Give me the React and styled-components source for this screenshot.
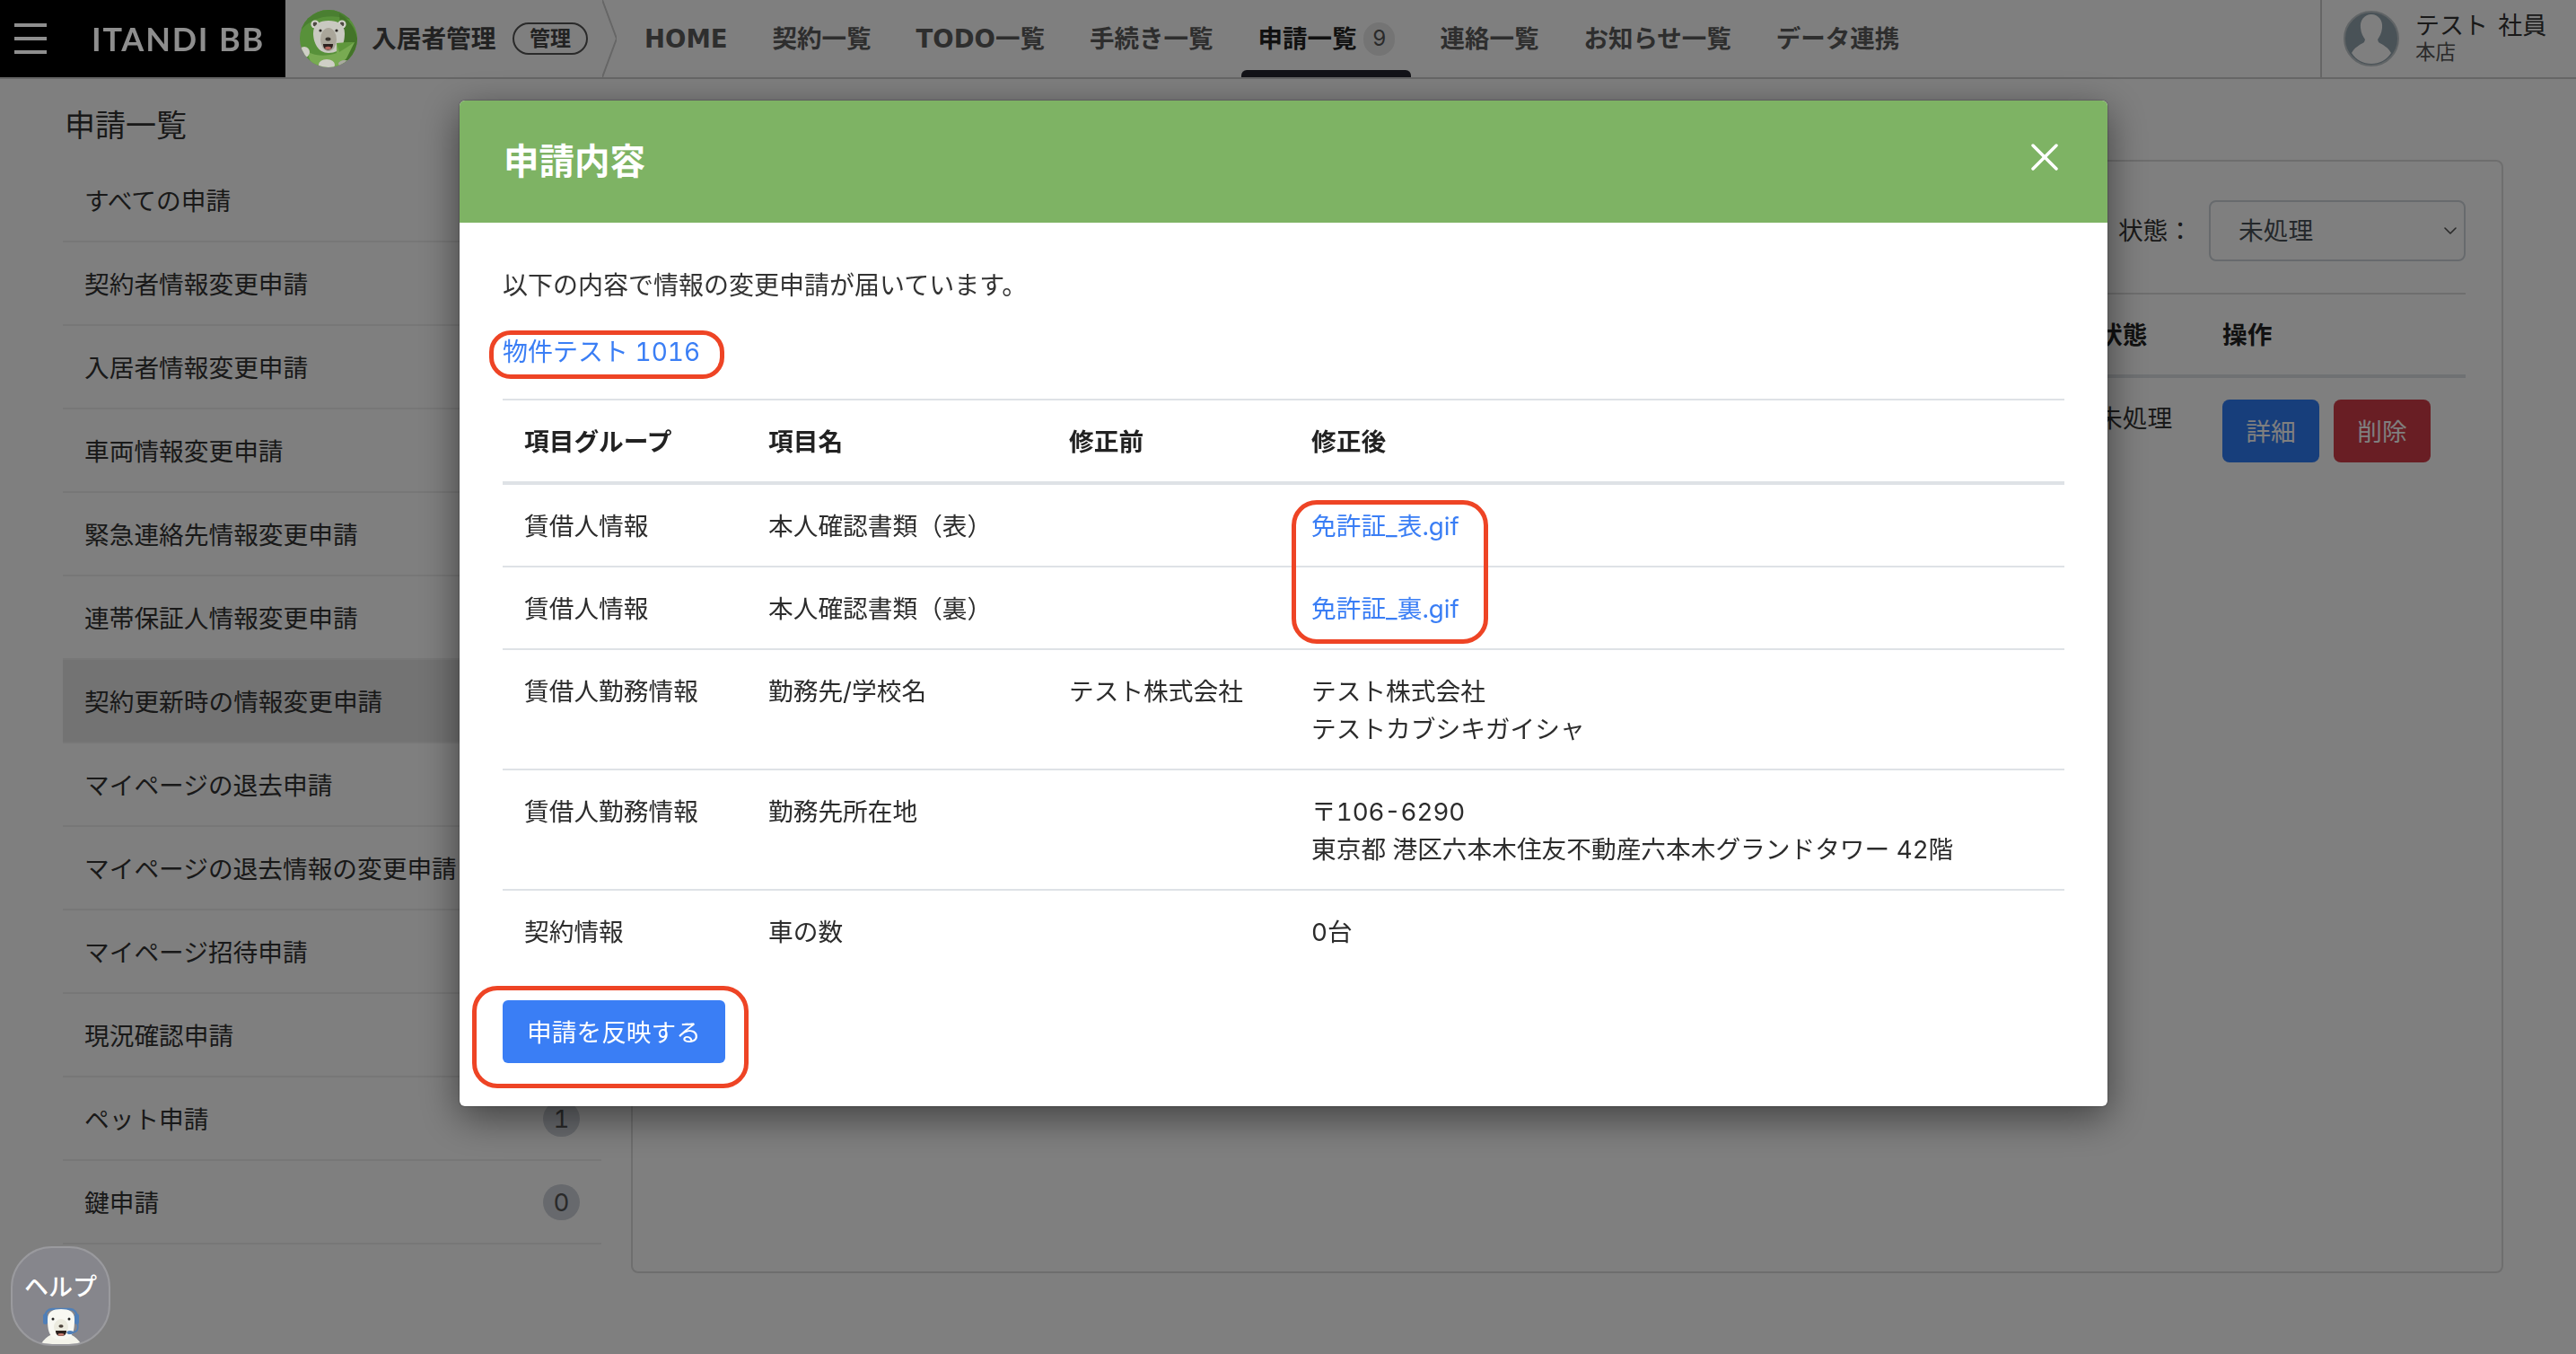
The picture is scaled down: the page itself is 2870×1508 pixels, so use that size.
import React from 'react';
import styled, { createGlobalStyle } from 'styled-components';
import { ChevronDown, X } from 'lucide-react';

const GlobalStyle = createGlobalStyle`
  html, body {
    margin: 0;
    height: 100%;
    overflow: hidden;
    background: #fff;
  }
  body {
    font-family: Inter, "Noto Sans CJK JP", sans-serif;
    font-size: 27.7px;
    font-variant-numeric: tabular-nums;
    line-height: 42px;
    color: #333;
  }
  * { box-sizing: border-box; }
`;

const Header = styled.header`
  display: flex;
  height: 88px;
  border-bottom: 2px solid #ccc;
`;

const BrandBlock = styled.div`
  display: flex;
  align-items: center;
  width: 318px;
  padding-left: 16px;
  background: #000;
`;

const Burger = styled.div`
  position: relative;
  z-index: 11;
  display: flex;
  flex-direction: column;
  gap: 11px;
  width: 36px;
  margin-right: 50px;
  span {
    height: 4px;
    background: #8e8e8e;
  }
`;

const BrandName = styled.div`
  position: relative;
  z-index: 11;
  font-family: Lato, sans-serif;
  font-size: 36px;
  font-weight: 700;
  letter-spacing: 1.8px;
  color: #8e8e8e;
  white-space: nowrap;
`;

const AppBlock = styled.div`
  display: flex;
  align-items: center;
  padding-left: 16px;
  font-weight: 700;
  color: #444;
`;

const AppLogo = styled.svg`
  position: relative;
  z-index: 11;
  width: 64px;
  height: 64px;
  margin-right: 16px;
`;

const AppName = styled.div`
  width: 157px;
  white-space: nowrap;
`;

const RoleBadge = styled.div`
  width: 84px;
  height: 36px;
  margin-right: 16px;
  border: 2px solid #555;
  border-radius: 18px;
  font-size: 23px;
  line-height: 32px;
  text-align: center;
`;

const Divider = styled.svg`
  width: 16px;
  height: 86px;
  margin-right: 13px;
`;

const Nav = styled.nav`
  display: flex;
  gap: 14px;
  font-family: "DejaVu Sans", "Noto Sans CJK JP", sans-serif;
  font-size: 27.5px;
`;

const NavItem = styled.a`
  position: relative;
  display: flex;
  align-items: center;
  gap: 8px;
  height: 86px;
  padding: 0 18px;
  font-weight: 700;
  white-space: nowrap;
  color: ${(props) => (props.$active ? '#222' : '#5c5c5c')};
  ${(props) =>
    props.$active &&
    `
    &::after {
      content: '';
      position: absolute;
      left: 0;
      right: 0;
      bottom: 0;
      height: 8px;
      border-radius: 6px 6px 0 0;
      background: #26262f;
    }
  `}
`;

const NavCount = styled.span`
  width: 35px;
  height: 37px;
  border-radius: 18px;
  background: #e8e8e8;
  font-family: Inter, sans-serif;
  font-size: 24px;
  font-weight: 400;
  line-height: 35px;
  text-align: center;
  color: #555;
`;

const UserBlock = styled.div`
  display: flex;
  align-items: center;
  gap: 18px;
  width: 285px;
  margin-left: auto;
  padding-left: 24px;
  border-left: 2px solid #ccc;
`;

const UserIcon = styled.svg`
  width: 62px;
  height: 62px;
`;

const UserName = styled.div`
  font-size: 27px;
  line-height: 30px;
  word-spacing: 4px;
  color: #333;
  white-space: nowrap;
`;

const UserBranch = styled.div`
  font-size: 22.5px;
  line-height: 28px;
  color: #555;
`;

const Layout = styled.div`
  display: flex;
`;

const Sidebar = styled.aside`
  flex: none;
  width: 670px;
  margin-left: 70px;
`;

const SidebarTitle = styled.h2`
  margin: 0 0 12px;
  padding: 26px 0 0 2px;
  font-size: 34px;
  font-weight: 400;
  line-height: 51px;
  color: #333;
`;

const SidebarRow = styled.a`
  display: flex;
  align-items: center;
  justify-content: space-between;
  width: 600px;
  height: 93px;
  padding: 2px 24px 0;
  border-bottom: 2px solid #eee;
  background: ${(props) => (props.$active ? '#e6e6e6' : 'transparent')};
  white-space: nowrap;
`;

const RowCount = styled.span`
  width: 41px;
  height: 40px;
  margin-top: -2px;
  border-radius: 20px;
  background: #cfd3da;
  line-height: 40px;
  text-align: center;
  color: #555;
`;

const Main = styled.main`
  flex: none;
  width: 2086px;
  height: 1240px;
  margin: 90px 0 0 -37px;
  padding: 43px 40px 0;
  border: 2px solid #dcdcdc;
  border-radius: 8px;
`;

const FilterBar = styled.div`
  display: flex;
  align-items: center;
  justify-content: flex-end;
  padding-bottom: 35px;
  border-bottom: 2px solid #ddd;
`;

const FilterLabel = styled.span`
  margin-right: 18px;
`;

const SelectWrap = styled.div`
  position: relative;
  width: 286px;
  height: 68px;
  svg {
    position: absolute;
    top: 22px;
    right: 5px;
    color: #555;
    pointer-events: none;
  }
`;

const StatusSelect = styled.select`
  width: 100%;
  height: 100%;
  padding-left: 31px;
  border: 2px solid #ced4da;
  border-radius: 8px;
  background: transparent;
  font: inherit;
  color: #495057;
  appearance: none;
`;

const RequestTable = styled.table`
  width: 100%;
  border-spacing: 0;
  table-layout: fixed;
  th {
    height: 93px;
    padding: 0 24px;
    border-bottom: 4px solid #dee2e6;
    font-weight: 700;
    text-align: left;
    color: #222;
  }
  td {
    padding: 24px;
    vertical-align: top;
  }
  td:last-child {
    display: flex;
    gap: 16px;
    padding-bottom: 0;
  }
`;

const SmallButton = styled.button`
  width: 108px;
  height: 70px;
  padding: 2px 0 0;
  border: 0;
  border-radius: 8px;
  background: ${(props) => (props.$danger ? '#d33c49' : '#2f7cf6')};
  font: inherit;
  color: #fff;
`;

const Backdrop = styled.div`
  position: fixed;
  inset: 0;
  z-index: 10;
  background: rgba(0, 0, 0, 0.5);
`;

const Modal = styled.section`
  position: absolute;
  top: 112px;
  left: 512px;
  width: 1836px;
  border-radius: 6px;
  background: #fff;
  box-shadow: 0 0 2px rgba(0, 0, 0, 0.5), 0 12px 44px rgba(0, 0, 0, 0.5);
  overflow: hidden;
`;

const ModalHead = styled.div`
  display: flex;
  align-items: center;
  justify-content: space-between;
  height: 136px;
  padding: 0 44px 0 49px;
  background: #7eb364;
  color: #fff;
`;

const ModalTitle = styled.h1`
  margin: 0;
  font-size: 39.5px;
  font-weight: 700;
`;

const CloseIcon = styled(X)`
  margin-bottom: 10px;
`;

const ModalBody = styled.div`
  padding: 49px 48px 48px;
`;

const Intro = styled.p`
  margin: 0 0 32px;
  font-size: 28px;
`;

const FileLink = styled.a`
  color: #3a7ef5;
`;

const PropertyLink = styled(FileLink)`
  display: block;
  margin-bottom: 31px;
  font-size: 28px;
`;

const ChangeTable = styled.table`
  width: 100%;
  border-spacing: 0;
  table-layout: fixed;
  color: #2c2c2c;
  th {
    padding: 25px 24px 23px;
    border-top: 2px solid #dee2e6;
    border-bottom: 4px solid #dee2e6;
    font-weight: 700;
    text-align: left;
    color: #222;
  }
  td {
    padding: 25px 24px 23px;
    vertical-align: top;
    border-top: 2px solid #dee2e6;
  }
  tbody tr:first-child td {
    border-top: 0;
  }
`;

const ApplyButton = styled.button`
  display: block;
  width: 248px;
  height: 70px;
  margin-top: 32px;
  padding: 2px 0 0;
  border: 0;
  border-radius: 6px;
  background: #3a7ef5;
  font: inherit;
  color: #fff;
`;

/* red marks drawn on top of the screenshot */
const Mark = styled.div`
  position: absolute;
  left: ${(props) => props.$x}px;
  top: ${(props) => props.$y}px;
  width: ${(props) => props.$w}px;
  height: ${(props) => props.$h}px;
  border: 5px solid #ee4425;
  border-radius: ${(props) => props.$r}px;
  pointer-events: none;
`;

const Help = styled.a`
  position: fixed;
  left: 12px;
  top: 1388px;
  z-index: 20;
  display: flex;
  flex-direction: column;
  align-items: center;
  width: 111px;
  height: 111px;
  padding-top: 26px;
  border: 2px solid #9a9a9e;
  border-radius: 46px;
  background: #86868c;
  font-size: 27px;
  font-weight: 500;
  line-height: 36px;
  color: #fff;
  white-space: nowrap;
  overflow: hidden;
`;

const HelpBear = styled.svg`
  flex: none;
  width: 48px;
  height: 44px;
  margin-top: 3px;
`;

const sideItems = [
  { label: 'すべての申請' },
  { label: '契約者情報変更申請' },
  { label: '入居者情報変更申請' },
  { label: '車両情報変更申請' },
  { label: '緊急連絡先情報変更申請' },
  { label: '連帯保証人情報変更申請' },
  { label: '契約更新時の情報変更申請', active: true },
  { label: 'マイページの退去申請' },
  { label: 'マイページの退去情報の変更申請' },
  { label: 'マイページ招待申請' },
  { label: '現況確認申請' },
  { label: 'ペット申請', count: 1 },
  { label: '鍵申請', count: 0 },
];

const navItems = ['HOME', '契約一覧', 'TODO一覧', '手続き一覧', '申請一覧', '連絡一覧', 'お知らせ一覧', 'データ連携'];

const BearLogo = () => (
  <AppLogo viewBox="0 0 64 64">
    <defs>
      <clipPath id="logo-clip">
        <circle cx="32" cy="32" r="32" />
      </clipPath>
    </defs>
    <g clipPath="url(#logo-clip)">
      <rect width="64" height="64" fill="#58913a" />
      <path d="M0 24 C14 6 38 2 64 14 L64 0 L0 0 Z" fill="#4a7f31" />
      <path d="M44 4 C54 10 62 20 64 32 L64 60 L48 60 Z" fill="#437429" />
      <circle cx="17" cy="16" r="4.6" fill="#d4d4cc" />
      <circle cx="47" cy="16" r="4.6" fill="#d4d4cc" />
      <circle cx="17" cy="16" r="2.4" fill="#4e4a42" />
      <circle cx="47" cy="16" r="2.4" fill="#4e4a42" />
      <path d="M15 26 C15 16 22 12 32 12 C42 12 50 16 50 26 C50 36 47 48 32 48 C20 48 15 36 15 26 Z" fill="#c9c9c1" />
      <ellipse cx="32" cy="33" rx="9" ry="13" fill="#aaa69a" />
      <circle cx="23" cy="23" r="1.6" fill="#2a2622" />
      <circle cx="41" cy="23" r="1.6" fill="#2a2622" />
      <ellipse cx="31.5" cy="32.5" rx="3" ry="2" fill="#3b3630" />
      <path d="M26 38 L37 38 C37 43 34 44.5 31.5 44.5 C29 44.5 26 43 26 38 Z" fill="#2c211e" />
      <ellipse cx="31.5" cy="42.5" rx="3.4" ry="1.8" fill="#b5695f" />
      <path d="M8 46 C18 52 30 52 41 48 L41 37 L61 36 L52 54 L42 64 L14 64 Z" fill="#78aa52" />
      <path d="M41 37 L61 36 L52 42 L44 47 Z" fill="#5f973c" />
      <circle cx="5" cy="47" r="6" fill="#cfcfc6" />
      <ellipse cx="30" cy="61" rx="9" ry="6" fill="#cfcfc6" />
      <ellipse cx="50" cy="60" rx="7" ry="4" fill="#a9a99f" />
    </g>
  </AppLogo>
);

const HeadsetBear = () => (
  <HelpBear viewBox="0 0 48 44">
    <path d="M6 14 C6 6 10 3 14 3 L34 3 C38 3 42 6 42 14" fill="none" stroke="#4f7fb8" strokeWidth="2.4" />
    <rect x="4" y="8" width="5" height="12" rx="2.5" fill="#4f7fb8" />
    <rect x="39" y="8" width="5" height="12" rx="2.5" fill="#4f7fb8" />
    <path d="M0 44 C4 38 8 34 12 32 L36 32 C40 34 44 38 48 44 Z" fill="#f3f3ea" />
    <path d="M9 14 C9 6 15 3 24 3 C33 3 39 6 39 14 C39 26 38 37 24 37 C10 37 9 26 9 14 Z" fill="#f8f8f2" />
    <ellipse cx="24" cy="23" rx="8" ry="9" fill="#ecebdf" />
    <circle cx="15" cy="14" r="1.5" fill="#222" />
    <circle cx="33" cy="14" r="1.5" fill="#222" />
    <ellipse cx="24" cy="22" rx="2.6" ry="1.8" fill="#4a4038" />
    <path d="M18 27 L30 27 C30 32 27 33 24 33 C21 33 18 32 18 27 Z" fill="#2c211e" />
    <ellipse cx="24" cy="31.4" rx="3.4" ry="1.4" fill="#c77d70" />
    <path d="M42 18 C44 26 42 29 35 29" fill="none" stroke="#4f7fb8" strokeWidth="1.8" />
    <ellipse cx="34" cy="29" rx="3.6" ry="2" fill="#4f7fb8" />
  </HelpBear>
);

export default function App() {
  return (
    <>
      <GlobalStyle />
      <Header>
        <BrandBlock>
          <Burger>
            <span />
            <span />
            <span />
          </Burger>
          <BrandName>ITANDI BB</BrandName>
        </BrandBlock>
        <AppBlock>
          <BearLogo />
          <AppName>入居者管理</AppName>
          <RoleBadge>管理</RoleBadge>
          <Divider viewBox="0 0 16 86">
            <path d="M0 0 L16 43 L0 86" fill="none" stroke="#ccc" strokeWidth="2" />
          </Divider>
        </AppBlock>
        <Nav>
          {navItems.map((item) => (
            <NavItem key={item} $active={item === '申請一覧'}>
              {item}
              {item === '申請一覧' && <NavCount>9</NavCount>}
            </NavItem>
          ))}
        </Nav>
        <UserBlock>
          <UserIcon viewBox="0 0 62 62">
            <circle cx="31" cy="31" r="30" fill="#93a4ae" stroke="#c0c8cc" strokeWidth="2" />
            <path d="M31 4 C39 4 44 11 43 19 C42.500 25 40 29 38 32 L39 35 C44 38 50 41 53 47 C48 55 40 59 31 59 C22 59 14 55 9 47 C12 41 18 38 23 35 L24 32 C22 29 19.500 25 19 19 C18 11 23 4 31 4 Z" fill="#fff" />
          </UserIcon>
          <div>
            <UserName>テスト 社員</UserName>
            <UserBranch>本店</UserBranch>
          </div>
        </UserBlock>
      </Header>
      <Layout>
        <Sidebar>
          <SidebarTitle>申請一覧</SidebarTitle>
          {sideItems.map((item) => (
            <SidebarRow key={item.label} $active={item.active}>
              {item.label}
              {item.count !== undefined && <RowCount>{item.count}</RowCount>}
            </SidebarRow>
          ))}
        </Sidebar>
        <Main>
          <FilterBar>
            <FilterLabel>状態：</FilterLabel>
            <SelectWrap>
              <StatusSelect defaultValue="未処理">
                <option>未処理</option>
              </StatusSelect>
              <ChevronDown size={24} strokeWidth={1.6} />
            </SelectWrap>
          </FilterBar>
          <RequestTable>
            <colgroup>
              <col />
              <col width="139" />
              <col width="295" />
            </colgroup>
            <thead>
              <tr>
                <th />
                <th>状態</th>
                <th>操作</th>
              </tr>
            </thead>
            <tbody>
              <tr>
                <td />
                <td>未処理</td>
                <td>
                  <SmallButton>詳細</SmallButton>
                  <SmallButton $danger>削除</SmallButton>
                </td>
              </tr>
            </tbody>
          </RequestTable>
        </Main>
      </Layout>
      <Backdrop>
        <Modal>
          <ModalHead>
            <ModalTitle>申請内容</ModalTitle>
            <CloseIcon size={52} strokeWidth={1.6} />
          </ModalHead>
          <ModalBody>
            <Intro>以下の内容で情報の変更申請が届いています。</Intro>
            <PropertyLink>物件テスト 1016</PropertyLink>
            <ChangeTable>
              <colgroup>
                <col width="272" />
                <col width="335" />
                <col width="270" />
                <col />
              </colgroup>
              <thead>
                <tr>
                  <th>項目グループ</th>
                  <th>項目名</th>
                  <th>修正前</th>
                  <th>修正後</th>
                </tr>
              </thead>
              <tbody>
                <tr>
                  <td>賃借人情報</td>
                  <td>本人確認書類（表）</td>
                  <td />
                  <td>
                    <FileLink>免許証_表.gif</FileLink>
                  </td>
                </tr>
                <tr>
                  <td>賃借人情報</td>
                  <td>本人確認書類（裏）</td>
                  <td />
                  <td>
                    <FileLink>免許証_裏.gif</FileLink>
                  </td>
                </tr>
                <tr>
                  <td>賃借人勤務情報</td>
                  <td>勤務先/学校名</td>
                  <td>テスト株式会社</td>
                  <td>
                    テスト株式会社
                    <br />
                    テストカブシキガイシャ
                  </td>
                </tr>
                <tr>
                  <td>賃借人勤務情報</td>
                  <td>勤務先所在地</td>
                  <td />
                  <td>
                    〒106-6290
                    <br />
                    東京都 港区六本木住友不動産六本木グランドタワー 42階
                  </td>
                </tr>
                <tr>
                  <td>契約情報</td>
                  <td>車の数</td>
                  <td />
                  <td>0台</td>
                </tr>
              </tbody>
            </ChangeTable>
            <ApplyButton>申請を反映する</ApplyButton>
          </ModalBody>
          <Mark $x={33} $y={256} $w={262} $h={54} $r={24} />
          <Mark $x={927} $y={445} $w={219} $h={160} $r={28} />
          <Mark $x={14} $y={986} $w={308} $h={114} $r={28} />
        </Modal>
      </Backdrop>
      <Help>
        ヘルプ
        <HeadsetBear />
      </Help>
    </>
  );
}
